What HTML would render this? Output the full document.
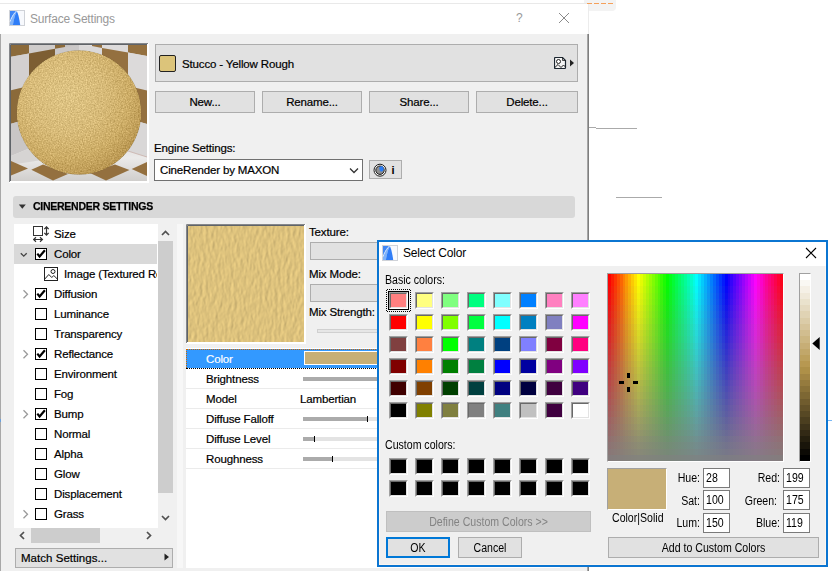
<!DOCTYPE html>
<html lang="en">
<head>
<meta charset="utf-8">
<title>Surface Settings</title>
<style>
*{box-sizing:border-box;margin:0;padding:0}
html,body{width:832px;height:571px;overflow:hidden;background:#fff}
body{position:relative;font-family:"Liberation Sans",sans-serif;font-size:12px;color:#000;line-height:1}
.a{position:absolute}
.t{position:absolute;white-space:nowrap;line-height:14px;height:14px}
.s{font-size:11.5px;letter-spacing:-.15px;-webkit-text-stroke:.2px}
.btn{position:absolute;background:#e1e1e1;border:1px solid #adadad;text-align:center;white-space:nowrap;font-size:11.5px;letter-spacing:-.15px;-webkit-text-stroke:.2px}
.cb{position:absolute;width:12px;height:12px;border:1px solid #000;background:#fff}
.cb svg{position:absolute;left:0;top:0}
.li{position:absolute;left:54px;white-space:nowrap;line-height:14px;height:14px;font-size:11.5px;letter-spacing:-.15px;-webkit-text-stroke:.2px}
.exp{position:absolute;left:21px;width:8px;height:10px}
.sw{position:absolute;width:19px;height:17px;border:1px solid;border-color:#a0a0a0 #fff #fff #a0a0a0}
.sw i{display:block;width:17px;height:15px;border:1px solid;border-color:#696969 #e3e3e3 #e3e3e3 #696969}
.row{position:absolute;left:186px;width:200px;height:1px;background:#ebebeb}
.rl{position:absolute;left:206px;white-space:nowrap;line-height:14px;height:14px;font-size:11.5px;letter-spacing:-.15px;-webkit-text-stroke:.2px}
.sl{position:absolute;left:303px;width:80px;height:4px;background:#e3e3e3}
.sl b{display:block;height:4px;background:#ababab}
.sl u{position:absolute;top:-1px;width:1px;height:6px;background:#000}
.inp{position:absolute;width:27px;height:20px;border:1px solid #7a7a7a;background:#fff}
.d2{font-size:12.3px;transform:scaleX(.86);transform-origin:0 50%}
.d2r{transform-origin:100% 50%}
.d2c{transform-origin:50% 50%}
</style>
</head>
<body>

<!-- ===== background page bits ===== -->

<div class="a" style="left:588px;top:127px;width:8px;height:1px;background:#aaa"></div>
<div class="a" style="left:596px;top:128px;width:41px;height:1px;background:#aaa"></div>
<div class="a" style="left:616px;top:197px;width:46px;height:1px;background:#aaa"></div>

<div class="a" style="left:828px;top:420px;width:4px;height:1px;background:#7ab8f5"></div>

<!-- ===== Surface Settings dialog ===== -->
<div class="a" style="left:584px;top:0;width:32px;height:11px;background:#f3f3f3;border-radius:0 0 4px 4px"></div>
<div class="a" id="dlg1" style="left:0;top:34px;width:588px;height:537px;background:#f0f0f0"></div>
<div class="a" style="left:0;top:3px;width:588px;height:31px;background:#fff"></div>
<div class="a" style="left:0;top:3px;width:589px;height:1px;background:#e9e9e9"></div>
<div class="a" style="left:588px;top:3px;width:1px;height:31px;background:#ececec"></div>
<div class="a" style="left:587px;top:3px;width:26px;height:1px;background:repeating-linear-gradient(90deg,#f5a05a 0 5px,transparent 5px 7px)"></div>
<div class="a" style="left:0;top:34px;width:1px;height:537px;background:#a8a8a8"></div>
<div class="a" style="left:587px;top:34px;width:1px;height:537px;background:#a6a6a6"></div>
<div class="a" style="left:588px;top:34px;width:1px;height:537px;background:#7f7f7f"></div>

<div class="a" style="left:0;top:419px;width:1px;height:3px;background:#6aa0dc"></div>
<!-- title icon -->
<svg class="a" style="left:9px;top:10px" width="16" height="16" viewBox="0 0 16 16">
<rect x="0.5" y="0.5" width="15" height="15" fill="#f2f6fc" stroke="#cfd2d8"/>
<rect x="9" y="1" width="6" height="14" fill="#f7f9fd"/>
<path d="M1 1H7.300Q3 5.500 1 11.300Z" fill="#3f87f6"/>
<path d="M7.300 1Q3 5.500 1 11.300V15H4Q5 6.500 7.800 1.400Z" fill="#7fb3fa"/>
<path d="M7.800 1.200Q9.800 4.500 11.200 15H3.900Q5 6.500 7.800 1.200Z" fill="#2f7df7"/>
<path d="M1 11.600Q3.200 5.300 7.500 .9" fill="none" stroke="#fff" stroke-width=".8" stroke-dasharray="1.600 .5"/>
</svg>
<div class="t" style="left:30px;top:12px;color:#999;font-size:12px;letter-spacing:-.2px;line-height:15px;height:15px" id="ttl">Surface Settings</div>
<div class="t" style="left:516px;top:11px;color:#999;font-size:12px" id="q">?</div>
<svg class="a" style="left:558px;top:12px" width="12" height="12" viewBox="0 0 12 12"><path d="M1 1L11 11M11 1L1 11" stroke="#8a8a8a" stroke-width="1" fill="none"/></svg>

<!-- preview sphere -->
<svg class="a" style="left:9px;top:43px" width="140" height="140" viewBox="0 0 140 140">
<defs>
<radialGradient id="sg" cx="0.40" cy="0.36" r="0.68">
<stop offset="0" stop-color="#e2c888"/><stop offset="0.45" stop-color="#dbbe7c"/><stop offset="0.75" stop-color="#d0b06a"/><stop offset="1" stop-color="#bc9954"/>
</radialGradient>
<filter id="nz" x="0" y="0" width="1" height="1" color-interpolation-filters="sRGB">
<feTurbulence type="fractalNoise" baseFrequency="0.75" numOctaves="2" seed="3" result="n"/>
<feColorMatrix in="n" type="matrix" values="1 0 0 0 0  1 0 0 0 0  1 0 0 0 0  0 0 0 0 1" result="g"/>
<feComposite in="SourceGraphic" in2="g" operator="arithmetic" k1="0" k2="1" k3="0.28" k4="-0.155" result="c"/>
<feComposite in="c" in2="SourceGraphic" operator="in"/>
</filter>
<linearGradient id="fg" x1="0" y1="0" x2="0" y2="1"><stop offset="0" stop-color="#dddbda"/><stop offset=".45" stop-color="#ebeae9"/><stop offset="1" stop-color="#cfcdcb"/></linearGradient>
<clipPath id="pc"><rect x="2" y="2" width="136" height="136"/></clipPath>
</defs>
<rect width="140" height="140" fill="#fff"/>
<g clip-path="url(#pc)">
<!-- walls base -->
<rect x="1" y="1" width="138" height="138" fill="#d2cfce"/>
<!-- left wall -->
<polygon points="1,1 70,1 70,95 1,114" fill="#cbc8c8"/>
<polygon points="1,1 20,1 20,10.500 1,14" fill="#8b6a3a"/>
<polygon points="20,1 46,1 46,5.800 20,10.500" fill="#cfcccb"/>
<polygon points="46,1 56,1 56,4 46,5.800" fill="#8b6a3a"/>
<polygon points="56,1 70,1 70,2 56,4" fill="#c4c1c0"/>
<polygon points="1,14 20,10.500 20,43 1,47.600" fill="#d3d0d0"/>
<polygon points="20,10.500 46,5.800 46,37 20,43" fill="#7d5e33"/>
<polygon points="1,47.600 20,43 20,75.500 1,81" fill="#8b6a3a"/>
<polygon points="1,81 20,75.500 20,105.500 1,113.500" fill="#c9c6c6"/>
<!-- right wall -->
<polygon points="70,1 138,1 138,114 70,95" fill="#dbd9d9"/>
<polygon points="70,1 83,1 83,3 70,2" fill="#e4e2e2"/>
<polygon points="83,1 93,1 93,5 83,3" fill="#94703f"/>
<polygon points="93,1 119,1 119,9.500 93,5" fill="#dddbdb"/>
<polygon points="119,1 138,1 138,13 119,9.500" fill="#94703f"/>
<polygon points="93,5 119,9.500 119,43 93,37" fill="#94703f"/>
<polygon points="119,9.500 138,13 138,47.600 119,43" fill="#dcdada"/>
<polygon points="119,43 138,47.600 138,81 119,75.500" fill="#94703f"/>
<polygon points="119,75.500 138,81 138,114 119,108" fill="#d9d7d7"/>
<!-- floor -->
<polygon points="1,113.500 20,105.500 70,95 119,108 138,114 138,139 1,139" fill="url(#fg)"/>
<polygon points="1,113.500 20,105.500 40,116 1,122" fill="#d6d4d3"/>
<polygon points="1,117.500 19,125.400 1,133" fill="#94703f"/>
<polygon points="22.300,126.800 34,121.500 59,131 44,137.500" fill="#94703f"/>
<polygon points="81,130 106,121.500 120.500,127 97,137.500" fill="#94703f"/>
<polygon points="122.700,126 138,119 138,133" fill="#94703f"/>
<line x1="118" y1="107.700" x2="138" y2="114" stroke="#c9b0a8" stroke-width="0.8"/>
<!-- sphere -->
<circle cx="70" cy="69.5" r="62.3" fill="url(#sg)" filter="url(#nz)"/>
</g>
<path d="M.5 139V.5H139" fill="none" stroke="#85878a"/>
<path d="M1.500 138V1.500H138" fill="none" stroke="#5f6368"/>
</svg>

<!-- name box -->
<div class="a" style="left:155px;top:44px;width:423px;height:38px;background:#e1e1e1;border:1px solid #adadad"></div>
<div class="a" style="left:159px;top:55px;width:17px;height:17px;background:#dcc47a;border:1px solid #222;border-radius:2px"></div>
<div class="t s" style="left:182px;top:57px" id="nm">Stucco - Yellow Rough</div>
<svg class="a" style="left:554px;top:57px" width="21" height="12" viewBox="0 0 21 12">
<path d="M1.500 .5h7l3 3v7q0 1-1 1h-9q-1 0-1-1v-9q0-1 1-1z" fill="#f4f4f4" stroke="#1c2630" stroke-width="1.200"/>
<path d="M8.500 .5v3h3" fill="none" stroke="#222" stroke-width=".8"/>
<circle cx="4.500" cy="4.500" r="2" fill="#fff" stroke="#222" stroke-width="1"/>
<path d="M.8 10.500l3.200-3 3 3 2.500-2.500 2 2" fill="none" stroke="#222" stroke-width="1"/>
<path d="M16 2.500l4 3.500l-4 3.500z" fill="#222"/>
</svg>

<!-- buttons -->
<div class="btn" style="left:155px;top:91px;width:100px;height:22px;line-height:20px">New...</div>
<div class="btn" style="left:262px;top:91px;width:100px;height:22px;line-height:20px">Rename...</div>
<div class="btn" style="left:369px;top:91px;width:100px;height:22px;line-height:20px">Share...</div>
<div class="btn" style="left:476px;top:91px;width:102px;height:22px;line-height:20px">Delete...</div>

<!-- engine settings -->
<div class="t s" style="left:154px;top:141px" id="es">Engine Settings:</div>
<div class="a" style="left:154px;top:159px;width:209px;height:22px;background:#fff;border:1px solid #707070"></div>
<div class="t s" style="left:160px;top:163px" id="cr">CineRender by MAXON</div>
<svg class="a" style="left:349px;top:167px" width="10" height="7" viewBox="0 0 10 7"><path d="M1 1.500l4 4l4-4" fill="none" stroke="#333" stroke-width="1.300"/></svg>
<div class="btn" style="left:369px;top:160px;width:33px;height:19px"></div>
<svg class="a" style="left:373px;top:163px" width="14" height="14" viewBox="0 0 14 14">
<circle cx="7" cy="7.200" r="6" fill="#fafafa" stroke="#1c1c1c" stroke-width="1"/>
<circle cx="7" cy="7.200" r="4.200" fill="#8f8f8f" stroke="#1c1c1c" stroke-width="1"/>
<path d="M6.300 4.300Q8 2.800 9.800 3.600L10.800 6.200Q10.200 8.600 8.200 8.700Q6 8 6.300 4.300Z" fill="#2b7df5"/>
</svg>
<div class="t" style="left:391.500px;top:163px;font-weight:bold;font-size:11px" >i</div>

<!-- section header -->
<div class="a" style="left:13px;top:196px;width:562px;height:22px;background:#d8d8d8;border-radius:3px"></div>
<svg class="a" style="left:18px;top:204px" width="9" height="6" viewBox="0 0 9 6"><path d="M.8 .5h7l-3.500 4.300z" fill="#333"/></svg>
<div class="t" style="left:33px;top:199px;font-weight:bold;font-size:11.5px;letter-spacing:-.3px;-webkit-text-stroke:.25px;transform:scaleX(.915);transform-origin:0 0" id="sh">CINERENDER SETTINGS</div>

<!-- list -->
<div class="a" style="left:14px;top:224px;width:144px;height:304px;background:#fff"></div>
<div class="a" style="left:14px;top:244px;width:143px;height:20px;background:#d9d9d9"></div>
<!-- vscroll -->
<div class="a" style="left:158px;top:224px;width:15px;height:304px;background:#f0f0f0"></div>
<div class="a" style="left:158px;top:241px;width:15px;height:252px;background:#cdcdcd"></div>
<svg class="a" style="left:161px;top:230px" width="9" height="6" viewBox="0 0 9 6"><path d="M1 5l3.500-3.500l3.500 3.500" fill="none" stroke="#505050" stroke-width="1.700"/></svg>
<svg class="a" style="left:161px;top:515px" width="9" height="6" viewBox="0 0 9 6"><path d="M1 1l3.500 3.500l3.500-3.500" fill="none" stroke="#505050" stroke-width="1.700"/></svg>
<!-- hscroll -->
<div class="a" style="left:31px;top:528px;width:69px;height:15px;background:#cdcdcd"></div>
<svg class="a" style="left:19px;top:531px" width="6" height="9" viewBox="0 0 6 9"><path d="M5 1l-3.500 3.500l3.500 3.500" fill="none" stroke="#505050" stroke-width="1.700"/></svg>
<svg class="a" style="left:146px;top:531px" width="6" height="9" viewBox="0 0 6 9"><path d="M1 1l3.500 3.500l-3.500 3.500" fill="none" stroke="#505050" stroke-width="1.700"/></svg>

<!-- list rows -->
<svg class="a" style="left:33px;top:226px" width="17" height="17" viewBox="0 0 17 17">
<rect x=".5" y=".5" width="9" height="9" fill="#fff" stroke="#333" stroke-width="1"/>
<path d="M13.500 1v8M11.300 3.200l2.200-2.400l2.200 2.400M11.300 6.800l2.200 2.400l2.200-2.400" fill="none" stroke="#333" stroke-width="1.200"/>
<path d="M.8 13.500h8.400M3 11.300l-2.400 2.200l2.400 2.200M7 11.300l2.400 2.200l-2.400 2.200" fill="none" stroke="#333" stroke-width="1.200"/>
</svg>
<div class="li" style="top:227px">Size</div>

<svg class="exp" style="top:250px;left:20px" width="10" height="8" viewBox="0 0 10 8"><path d="M1 1.700l3.700 3.700l3.700-3.700" fill="none" stroke="#444" stroke-width="1.700"/></svg>
<div class="cb" style="left:35px;top:248px"><svg width="10" height="10" viewBox="0 0 10 10"><path d="M1.300 4.600l2.300 2.900l5.300-6.300" fill="none" stroke="#000" stroke-width="2.200"/></svg></div>
<div class="li" style="top:247px">Color</div>

<svg class="a" style="left:44px;top:267px" width="14" height="14" viewBox="0 0 14 14">
<rect x=".5" y=".5" width="13" height="13" fill="#fff" stroke="#222"/>
<circle cx="9" cy="4.500" r="2" fill="#fff" stroke="#222"/>
<path d="M.8 12l4-4.500 3 3 2-2 3.500 3.500" fill="none" stroke="#222"/>
</svg>
<div class="li" style="top:267px;left:64px;width:93px;overflow:hidden">Image (Textured Re</div>

<svg class="exp" style="top:289px;left:22px" width="8" height="10" viewBox="0 0 8 10"><path d="M1.500 1.300l4 4l-4 4" fill="none" stroke="#9a9a9a" stroke-width="1.300"/></svg>
<div class="cb" style="left:35px;top:288px"><svg width="10" height="10" viewBox="0 0 10 10"><path d="M1.300 4.600l2.300 2.900l5.300-6.300" fill="none" stroke="#000" stroke-width="2.200"/></svg></div>
<div class="li" style="top:287px">Diffusion</div>

<div class="cb" style="left:35px;top:308px"></div>
<div class="li" style="top:307px">Luminance</div>

<div class="cb" style="left:35px;top:328px"></div>
<div class="li" style="top:327px">Transparency</div>

<svg class="exp" style="top:349px;left:22px" width="8" height="10" viewBox="0 0 8 10"><path d="M1.500 1.300l4 4l-4 4" fill="none" stroke="#9a9a9a" stroke-width="1.300"/></svg>
<div class="cb" style="left:35px;top:348px"><svg width="10" height="10" viewBox="0 0 10 10"><path d="M1.300 4.600l2.300 2.900l5.300-6.300" fill="none" stroke="#000" stroke-width="2.200"/></svg></div>
<div class="li" style="top:347px">Reflectance</div>

<div class="cb" style="left:35px;top:368px"></div>
<div class="li" style="top:367px">Environment</div>

<div class="cb" style="left:35px;top:388px"></div>
<div class="li" style="top:387px">Fog</div>

<svg class="exp" style="top:409px;left:22px" width="8" height="10" viewBox="0 0 8 10"><path d="M1.500 1.300l4 4l-4 4" fill="none" stroke="#9a9a9a" stroke-width="1.300"/></svg>
<div class="cb" style="left:35px;top:408px"><svg width="10" height="10" viewBox="0 0 10 10"><path d="M1.300 4.600l2.300 2.900l5.300-6.300" fill="none" stroke="#000" stroke-width="2.200"/></svg></div>
<div class="li" style="top:407px">Bump</div>

<div class="cb" style="left:35px;top:428px"></div>
<div class="li" style="top:427px">Normal</div>

<div class="cb" style="left:35px;top:448px"></div>
<div class="li" style="top:447px">Alpha</div>

<div class="cb" style="left:35px;top:468px"></div>
<div class="li" style="top:467px">Glow</div>

<div class="cb" style="left:35px;top:488px"></div>
<div class="li" style="top:487px">Displacement</div>

<svg class="exp" style="top:509px;left:22px" width="8" height="10" viewBox="0 0 8 10"><path d="M1.500 1.300l4 4l-4 4" fill="none" stroke="#9a9a9a" stroke-width="1.300"/></svg>
<div class="cb" style="left:35px;top:508px"></div>
<div class="li" style="top:507px">Grass</div>

<!-- match settings -->
<div class="btn" style="left:15px;top:548px;width:158px;height:20px;text-align:left;padding-left:5px;line-height:18px;letter-spacing:.03px">Match Settings...</div>
<svg class="a" style="left:164px;top:553px" width="6" height="8" viewBox="0 0 6 8"><path d="M.5 .5l4.500 3.500l-4.500 3.500z" fill="#222"/></svg>

<!-- right panel -->
<div class="a" style="left:177px;top:224px;width:6px;height:344px;background:#f7f7f7"></div>
<div class="a" style="left:186px;top:348px;width:374px;height:220px;background:#fff"></div>

<!-- texture preview -->
<svg class="a" style="left:186px;top:224px" width="120" height="120" viewBox="0 0 120 120">
<defs>
<filter id="tx" x="0" y="0" width="1" height="1" color-interpolation-filters="sRGB">
<feTurbulence type="fractalNoise" baseFrequency="0.32 0.13" numOctaves="3" seed="11" result="n"/>
<feDiffuseLighting in="n" surfaceScale="0.33" diffuseConstant="1.185" lighting-color="#dcc17c" result="l"><feDistantLight azimuth="200" elevation="58"/></feDiffuseLighting>
<feComposite in="l" in2="SourceGraphic" operator="in"/>
</filter>
</defs>
<rect width="120" height="120" fill="#fff"/>
<rect x="2" y="2" width="116" height="116" fill="#dcc27e" filter="url(#tx)"/>
<path d="M.5 119V.5H119" fill="none" stroke="#85878a"/>
<path d="M1.500 118V1.500H118" fill="none" stroke="#5f6368"/>
</svg>
<div class="t s" style="left:309px;top:225px">Texture:</div>
<div class="a" style="left:310px;top:242px;width:80px;height:18px;background:#e1e1e1;border:1px solid #adadad"></div>
<div class="t s" style="left:309px;top:267px">Mix Mode:</div>
<div class="a" style="left:310px;top:284px;width:80px;height:18px;background:#e1e1e1;border:1px solid #adadad"></div>
<div class="t s" style="left:309px;top:305px">Mix Strength:</div>
<div class="a" style="left:317px;top:329px;width:70px;height:4px;background:#e6e6e6;border:1px solid #d0d0d0"></div>

<!-- property table -->
<div class="a" style="left:186px;top:349px;width:200px;height:19px;background:#3399ff;border-top:1px dotted #cc6600;border-left:1px dotted #cc6600"></div>
<div class="a" style="left:186px;top:368px;width:200px;height:0;border-top:1px dotted #000"></div>
<div class="a" style="left:304px;top:351px;width:80px;height:14px;background:#c7af77;border:1px solid #fff"></div>
<div class="rl" style="top:352px;color:#fff">Color</div>
<div class="row" style="top:388px"></div>
<div class="rl" style="top:372px">Brightness</div>
<div class="sl" style="top:377px"><b style="width:80px"></b></div>
<div class="row" style="top:408px"></div>
<div class="rl" style="top:392px">Model</div>
<div class="rl" style="top:392px;left:300px">Lambertian</div>
<div class="row" style="top:428px"></div>
<div class="rl" style="top:412px">Diffuse Falloff</div>
<div class="sl" style="top:417px"><b style="width:64px"></b><u style="left:64px"></u></div>
<div class="row" style="top:448px"></div>
<div class="rl" style="top:432px">Diffuse Level</div>
<div class="sl" style="top:437px"><b style="width:11px"></b><u style="left:11px"></u></div>
<div class="row" style="top:468px"></div>
<div class="rl" style="top:452px">Roughness</div>
<div class="sl" style="top:457px"><b style="width:29px"></b><u style="left:29px"></u></div>

<!-- ===== Select Color dialog ===== -->
<div class="a" id="dlg2" style="left:377px;top:240px;width:451px;height:327px;background:#f0f0f0;border:2px solid #0b75d1;box-shadow:inset 0 0 0 1px #fbf6f1"></div>
<div class="a" style="left:379px;top:242px;width:447px;height:24px;background:#fff"></div>
<svg class="a" style="left:382px;top:245px" width="16" height="16" viewBox="0 0 16 16">
<rect x="0.5" y="0.5" width="15" height="15" fill="#f2f6fc" stroke="#cfd2d8"/>
<rect x="9" y="1" width="6" height="14" fill="#f7f9fd"/>
<path d="M1 1H7.300Q3 5.500 1 11.300Z" fill="#3f87f6"/>
<path d="M7.300 1Q3 5.500 1 11.300V15H4Q5 6.500 7.800 1.400Z" fill="#7fb3fa"/>
<path d="M7.800 1.200Q9.800 4.500 11.200 15H3.900Q5 6.500 7.800 1.200Z" fill="#2f7df7"/>
<path d="M1 11.600Q3.200 5.300 7.500 .9" fill="none" stroke="#fff" stroke-width=".8" stroke-dasharray="1.600 .5"/>
</svg>
<div class="t" style="left:403px;top:246px;font-size:12px;letter-spacing:-.2px;line-height:15px;height:15px" id="sc">Select Color</div>
<svg class="a" style="left:805px;top:247px" width="12" height="12" viewBox="0 0 12 12"><path d="M1 1L11 11M11 1L1 11" stroke="#000" stroke-width="1.100" fill="none"/></svg>

<div class="t d2" style="left:385px;top:273px" id="bc">Basic colors:</div>
<div class="sw" style="left:389px;top:292px"><i style="background:#ff8080"></i></div>
<div class="sw" style="left:415px;top:292px"><i style="background:#ffff80"></i></div>
<div class="sw" style="left:441px;top:292px"><i style="background:#80ff80"></i></div>
<div class="sw" style="left:467px;top:292px"><i style="background:#00ff80"></i></div>
<div class="sw" style="left:493px;top:292px"><i style="background:#80ffff"></i></div>
<div class="sw" style="left:519px;top:292px"><i style="background:#0080ff"></i></div>
<div class="sw" style="left:545px;top:292px"><i style="background:#ff80c0"></i></div>
<div class="sw" style="left:571px;top:292px"><i style="background:#ff80ff"></i></div>
<div class="sw" style="left:389px;top:314px"><i style="background:#ff0000"></i></div>
<div class="sw" style="left:415px;top:314px"><i style="background:#ffff00"></i></div>
<div class="sw" style="left:441px;top:314px"><i style="background:#80ff00"></i></div>
<div class="sw" style="left:467px;top:314px"><i style="background:#00ff40"></i></div>
<div class="sw" style="left:493px;top:314px"><i style="background:#00ffff"></i></div>
<div class="sw" style="left:519px;top:314px"><i style="background:#0080c0"></i></div>
<div class="sw" style="left:545px;top:314px"><i style="background:#8080c0"></i></div>
<div class="sw" style="left:571px;top:314px"><i style="background:#ff00ff"></i></div>
<div class="sw" style="left:389px;top:336px"><i style="background:#804040"></i></div>
<div class="sw" style="left:415px;top:336px"><i style="background:#ff8040"></i></div>
<div class="sw" style="left:441px;top:336px"><i style="background:#00ff00"></i></div>
<div class="sw" style="left:467px;top:336px"><i style="background:#008080"></i></div>
<div class="sw" style="left:493px;top:336px"><i style="background:#004080"></i></div>
<div class="sw" style="left:519px;top:336px"><i style="background:#8080ff"></i></div>
<div class="sw" style="left:545px;top:336px"><i style="background:#800040"></i></div>
<div class="sw" style="left:571px;top:336px"><i style="background:#ff0080"></i></div>
<div class="sw" style="left:389px;top:358px"><i style="background:#800000"></i></div>
<div class="sw" style="left:415px;top:358px"><i style="background:#ff8000"></i></div>
<div class="sw" style="left:441px;top:358px"><i style="background:#008000"></i></div>
<div class="sw" style="left:467px;top:358px"><i style="background:#008040"></i></div>
<div class="sw" style="left:493px;top:358px"><i style="background:#0000ff"></i></div>
<div class="sw" style="left:519px;top:358px"><i style="background:#0000a0"></i></div>
<div class="sw" style="left:545px;top:358px"><i style="background:#800080"></i></div>
<div class="sw" style="left:571px;top:358px"><i style="background:#8000ff"></i></div>
<div class="sw" style="left:389px;top:380px"><i style="background:#400000"></i></div>
<div class="sw" style="left:415px;top:380px"><i style="background:#804000"></i></div>
<div class="sw" style="left:441px;top:380px"><i style="background:#004000"></i></div>
<div class="sw" style="left:467px;top:380px"><i style="background:#004040"></i></div>
<div class="sw" style="left:493px;top:380px"><i style="background:#000080"></i></div>
<div class="sw" style="left:519px;top:380px"><i style="background:#000040"></i></div>
<div class="sw" style="left:545px;top:380px"><i style="background:#400040"></i></div>
<div class="sw" style="left:571px;top:380px"><i style="background:#400080"></i></div>
<div class="sw" style="left:389px;top:402px"><i style="background:#000000"></i></div>
<div class="sw" style="left:415px;top:402px"><i style="background:#808000"></i></div>
<div class="sw" style="left:441px;top:402px"><i style="background:#808040"></i></div>
<div class="sw" style="left:467px;top:402px"><i style="background:#808080"></i></div>
<div class="sw" style="left:493px;top:402px"><i style="background:#408080"></i></div>
<div class="sw" style="left:519px;top:402px"><i style="background:#c0c0c0"></i></div>
<div class="sw" style="left:545px;top:402px"><i style="background:#400040"></i></div>
<div class="sw" style="left:571px;top:402px"><i style="background:#ffffff"></i></div>
<div class="sw" style="left:389px;top:458px"><i style="background:#000"></i></div>
<div class="sw" style="left:415px;top:458px"><i style="background:#000"></i></div>
<div class="sw" style="left:441px;top:458px"><i style="background:#000"></i></div>
<div class="sw" style="left:467px;top:458px"><i style="background:#000"></i></div>
<div class="sw" style="left:493px;top:458px"><i style="background:#000"></i></div>
<div class="sw" style="left:519px;top:458px"><i style="background:#000"></i></div>
<div class="sw" style="left:545px;top:458px"><i style="background:#000"></i></div>
<div class="sw" style="left:571px;top:458px"><i style="background:#000"></i></div>
<div class="sw" style="left:389px;top:480px"><i style="background:#000"></i></div>
<div class="sw" style="left:415px;top:480px"><i style="background:#000"></i></div>
<div class="sw" style="left:441px;top:480px"><i style="background:#000"></i></div>
<div class="sw" style="left:467px;top:480px"><i style="background:#000"></i></div>
<div class="sw" style="left:493px;top:480px"><i style="background:#000"></i></div>
<div class="sw" style="left:519px;top:480px"><i style="background:#000"></i></div>
<div class="sw" style="left:545px;top:480px"><i style="background:#000"></i></div>
<div class="sw" style="left:571px;top:480px"><i style="background:#000"></i></div>
<div class="a" style="left:387px;top:289px;width:23px;height:1px;background:repeating-linear-gradient(90deg,#000 0 1px,transparent 1px 2px)"></div>
<div class="a" style="left:387px;top:311px;width:23px;height:1px;background:repeating-linear-gradient(90deg,#000 0 1px,transparent 1px 2px)"></div>
<div class="a" style="left:386px;top:290px;width:1px;height:21px;background:repeating-linear-gradient(180deg,#000 0 1px,transparent 1px 2px)"></div>
<div class="a" style="left:410px;top:290px;width:1px;height:21px;background:repeating-linear-gradient(180deg,#000 0 1px,transparent 1px 2px)"></div>
<div class="a" style="left:388px;top:291px;width:21px;height:19px;border:1px solid #000"></div>
<div class="t d2" style="left:385px;top:438px" id="cc">Custom colors:</div>

<div class="a" style="left:386px;top:511px;width:205px;height:21px;background:#cccccc;border:1px solid #bfbfbf"></div>
<div class="t d2 d2c" style="left:386px;top:515px;width:205px;text-align:center;color:#838383" id="dcc">Define Custom Colors &gt;&gt;</div>

<div class="a" style="left:386px;top:537px;width:64px;height:21px;background:#e1e1e1;border:2px solid #0078d7"></div>
<div class="t d2 d2c" style="left:386px;top:541px;width:64px;text-align:center">OK</div>
<div class="btn" style="left:458px;top:537px;width:64px;height:21px"></div>
<div class="t d2 d2c" style="left:458px;top:541px;width:64px;text-align:center">Cancel</div>

<!-- spectrum -->
<div class="a" style="left:607px;top:273px;width:177px;height:189px;background:linear-gradient(to bottom,rgba(128,128,128,0) 0px 6.23px,rgba(128,128,128,0.03) 6.23px 12.47px,rgba(128,128,128,0.07) 12.47px 18.7px,rgba(128,128,128,0.1) 18.7px 24.93px,rgba(128,128,128,0.13) 24.93px 31.17px,rgba(128,128,128,0.17) 31.17px 37.4px,rgba(128,128,128,0.2) 37.4px 43.63px,rgba(128,128,128,0.23) 43.63px 49.87px,rgba(128,128,128,0.27) 49.87px 56.1px,rgba(128,128,128,0.3) 56.1px 62.33px,rgba(128,128,128,0.33) 62.33px 68.57px,rgba(128,128,128,0.37) 68.57px 74.8px,rgba(128,128,128,0.4) 74.8px 81.03px,rgba(128,128,128,0.43) 81.03px 87.27px,rgba(128,128,128,0.47) 87.27px 93.5px,rgba(128,128,128,0.5) 93.5px 99.73px,rgba(128,128,128,0.53) 99.73px 105.97px,rgba(128,128,128,0.57) 105.97px 112.2px,rgba(128,128,128,0.6) 112.2px 118.43px,rgba(128,128,128,0.63) 118.43px 124.67px,rgba(128,128,128,0.67) 124.67px 130.9px,rgba(128,128,128,0.7) 130.9px 137.13px,rgba(128,128,128,0.73) 137.13px 143.37px,rgba(128,128,128,0.77) 143.37px 149.6px,rgba(128,128,128,0.8) 149.6px 155.83px,rgba(128,128,128,0.83) 155.83px 162.07px,rgba(128,128,128,0.87) 162.07px 168.3px,rgba(128,128,128,0.9) 168.3px 174.53px,rgba(128,128,128,0.93) 174.53px 180.77px,rgba(128,128,128,0.97) 180.77px 187px),linear-gradient(to right,#ff0000 0px 2.92px,#ff1a00 2.92px 5.83px,#ff3300 5.83px 8.75px,#ff4d00 8.75px 11.67px,#ff6600 11.67px 14.58px,#ff8000 14.58px 17.5px,#ff9900 17.5px 20.42px,#ffb200 20.42px 23.33px,#ffcc00 23.33px 26.25px,#ffe500 26.25px 29.17px,#ffff00 29.17px 32.08px,#e6ff00 32.08px 35px,#ccff00 35px 37.92px,#b2ff00 37.92px 40.83px,#99ff00 40.83px 43.75px,#80ff00 43.75px 46.67px,#66ff00 46.67px 49.58px,#4cff00 49.58px 52.5px,#33ff00 52.5px 55.42px,#1aff00 55.42px 58.33px,#00ff00 58.33px 61.25px,#00ff19 61.25px 64.17px,#00ff33 64.17px 67.08px,#00ff4d 67.08px 70px,#00ff66 70px 72.92px,#00ff80 72.92px 75.83px,#00ff99 75.83px 78.75px,#00ffb3 78.75px 81.67px,#00ffcc 81.67px 84.58px,#00ffe6 84.58px 87.5px,#00ffff 87.5px 90.42px,#00e5ff 90.42px 93.33px,#00ccff 93.33px 96.25px,#00b2ff 96.25px 99.17px,#0099ff 99.17px 102.08px,#007fff 102.08px 105px,#0066ff 105px 107.92px,#004cff 107.92px 110.83px,#0033ff 110.83px 113.75px,#0019ff 113.75px 116.67px,#0000ff 116.67px 119.58px,#1900ff 119.58px 122.5px,#3300ff 122.5px 125.42px,#4d00ff 125.42px 128.33px,#6600ff 128.33px 131.25px,#7f00ff 131.25px 134.17px,#9900ff 134.17px 137.08px,#b300ff 137.08px 140px,#cc00ff 140px 142.92px,#e500ff 142.92px 145.83px,#ff00ff 145.83px 148.75px,#ff00e6 148.75px 151.67px,#ff00cc 151.67px 154.58px,#ff00b2 154.58px 157.5px,#ff0099 157.5px 160.42px,#ff0080 160.42px 163.33px,#ff0066 163.33px 166.25px,#ff004c 166.25px 169.17px,#ff0033 169.17px 172.08px,#ff001a 172.08px 175px);border:1px solid;border-color:#a0a0a0 #fff #fff #a0a0a0"></div>
<!-- crosshair -->
<div class="a" style="left:627px;top:373px;width:3px;height:5px;background:#000"></div>
<div class="a" style="left:627px;top:387px;width:3px;height:5px;background:#000"></div>
<div class="a" style="left:619px;top:381px;width:5px;height:3px;background:#000"></div>
<div class="a" style="left:633px;top:381px;width:5px;height:3px;background:#000"></div>
<!-- lum bar -->
<div class="a" style="left:799px;top:273px;width:12px;height:189px;background:linear-gradient(to bottom,#ffffff 0px 6.23px,#faf8f3 6.23px 12.47px,#f5f0e6 12.47px 18.7px,#f0e9da 18.7px 24.93px,#eae2cd 24.93px 31.17px,#e5dac1 31.17px 37.4px,#e0d3b4 37.4px 43.63px,#dbcca8 43.63px 49.87px,#d6c49b 49.87px 56.1px,#d1bd8f 56.1px 62.33px,#ccb682 62.33px 68.57px,#c7ae76 68.57px 74.8px,#c1a76a 74.8px 81.03px,#bca05d 81.03px 87.27px,#b79851 87.27px 93.5px,#ae9048 93.5px 99.73px,#a28543 99.73px 105.97px,#957b3e 105.97px 112.2px,#897138 112.2px 118.43px,#7d6733 118.43px 124.67px,#705c2e 124.67px 130.9px,#645229 130.9px 137.13px,#574824 137.13px 143.37px,#4b3e1f 143.37px 149.6px,#3e331a 149.6px 155.83px,#322915 155.83px 162.07px,#251f0f 162.07px 168.3px,#19150a 168.3px 174.53px,#0c0a05 174.53px 180.77px,#000000 180.77px 187px);border:1px solid;border-color:#a0a0a0 #fff #fff #a0a0a0"></div>
<svg class="a" style="left:812px;top:337px" width="8" height="13" viewBox="0 0 8 13"><path d="M7.700 0v13L.3 6.500z" fill="#000"/></svg>

<!-- color/solid -->
<div class="a" style="left:607px;top:468px;width:60px;height:42px;background:#c7af77;border:1px solid;border-color:#a0a0a0 #fff #fff #a0a0a0"></div>
<div class="t d2" style="left:612px;top:511px" id="cs">Color|Solid</div>

<div class="t d2 d2r" style="left:640px;top:471px;width:60px;text-align:right">Hue:</div>
<div class="t d2 d2r" style="left:640px;top:494px;width:60px;text-align:right">Sat:</div>
<div class="t d2 d2r" style="left:640px;top:516px;width:60px;text-align:right">Lum:</div>
<div class="inp" style="left:703px;top:468px"></div>
<div class="inp" style="left:703px;top:490px"></div>
<div class="inp" style="left:703px;top:513px"></div>
<div class="t d2" style="left:706px;top:471px">28</div>
<div class="t d2" style="left:706px;top:493px">100</div>
<div class="t d2" style="left:706px;top:516px">150</div>

<div class="t d2 d2r" style="left:720px;top:471px;width:60px;text-align:right">Red:</div>
<div class="t d2 d2r" style="left:717px;top:494px;width:60px;text-align:right">Green:</div>
<div class="t d2 d2r" style="left:720px;top:516px;width:60px;text-align:right">Blue:</div>
<div class="inp" style="left:783px;top:468px"></div>
<div class="inp" style="left:783px;top:490px"></div>
<div class="inp" style="left:783px;top:513px"></div>
<div class="t d2" style="left:786px;top:471px">199</div>
<div class="t d2" style="left:786px;top:493px">175</div>
<div class="t d2" style="left:786px;top:516px">119</div>

<div class="btn" style="left:608px;top:537px;width:211px;height:21px"></div>
<div class="t d2 d2c" style="left:608px;top:541px;width:211px;text-align:center">Add to Custom Colors</div>

</body>
</html>
